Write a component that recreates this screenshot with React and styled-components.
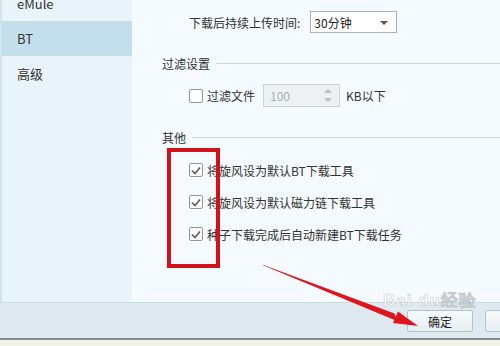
import styled, { createGlobalStyle } from "styled-components";

const GlobalStyle = createGlobalStyle`
  body {
    margin: 0;
    background: #f2f2ec;
    font-family: "Noto Sans CJK SC", "Liberation Sans", sans-serif;
    font-size: 12px;
    color: #333;
  }
`;

const Window = styled.div`
  position: relative;
  width: 500px;
  height: 340px;
  display: flex;
  flex-direction: column;
  overflow: hidden;
  border-bottom: 2px solid #858b8f;
  box-sizing: border-box;
`;

const Body = styled.div`
  display: flex;
  height: 304px;
`;

const Sidebar = styled.div`
  width: 130px;
  border-left: 2px solid #d2e3ec;
  background: #e9f4fa;
  display: flex;
  flex-direction: column;
  margin-top: -14px;
`;

const NavItem = styled.div`
  height: 35px;
  display: flex;
  align-items: center;
  padding-left: 15px;
  font-size: 13px;
  color: #333;
  background: ${({ $active }) => ($active ? "#c4dfec" : "transparent")};
`;

const Main = styled.div`
  flex: 1;
  background: #f4fafd;
  padding: 11px 0 0 30px;
  display: flex;
  flex-direction: column;
`;

const Row = styled.div`
  display: flex;
  align-items: center;
  height: ${({ $h }) => $h || 22}px;
  margin-left: ${({ $indent }) => ($indent ? 27 : 0)}px;
  margin-top: ${({ $mt }) => $mt || 0}px;
`;

const Label = styled.span`
  white-space: nowrap;
`;

const Select = styled.div`
  width: 87px;
  height: 22px;
  box-sizing: border-box;
  margin-left: 10px;
  border: 1px solid #a9b4ba;
  background: #fff;
  display: flex;
  align-items: center;
  justify-content: space-between;
  padding: 0 8px 0 3px;
  font-size: 12px;
  color: #222;
`;

const Caret = styled.span`
  width: 0;
  height: 0;
  border-left: 4px solid transparent;
  border-right: 4px solid transparent;
  border-top: 4px solid #555;
  margin-top: 2px;
`;

const SectionHead = styled.div`
  display: flex;
  align-items: center;
  height: 16px;
  margin-top: ${({ $mt }) => $mt}px;
  font-size: 12px;
  color: #333;

  &::after {
    content: "";
    flex: 1;
    height: 1px;
    margin-left: 6px;
    background: #ccd7dc;
  }
`;

const Box = styled.span`
  width: 14px;
  height: 14px;
  box-sizing: border-box;
  border: 1px solid #8e989d;
  border-radius: 2px;
  background: #fff;
  display: flex;
  align-items: center;
  justify-content: center;
  margin-right: 4px;
  flex-shrink: 0;
`;

const NumInput = styled.div`
  width: 77px;
  height: 23px;
  box-sizing: border-box;
  margin: 0 6px 0 8px;
  border: 1px solid #cbd2d6;
  background: #edf1f3;
  color: #a7afb4;
  display: flex;
  align-items: center;
  justify-content: space-between;
  padding: 0 7px 0 6px;
`;

const Spin = styled.span`
  display: flex;
  flex-direction: column;
  gap: 5px;

  &::before,
  &::after {
    content: "";
    width: 0;
    height: 0;
    border-left: 4px solid transparent;
    border-right: 4px solid transparent;
  }
  &::before {
    border-bottom: 4px solid #b9c1c6;
  }
  &::after {
    border-top: 4px solid #b9c1c6;
  }
`;

const Footer = styled.div`
  height: 34px;
  border-top: 1px solid #c9dae3;
  background: #dfeaf0;
  display: flex;
  align-items: center;
  justify-content: flex-end;
  gap: 12px;
  margin-right: -51px;
  padding-top: 1px;
`;

const Button = styled.div`
  width: 66px;
  height: 22px;
  box-sizing: border-box;
  border: 1px solid #b3c1c9;
  border-radius: 2px;
  background: linear-gradient(#f5f9fb, #e6eef2);
  display: flex;
  align-items: center;
  justify-content: center;
  font-size: 12px;
  color: #222;
`;

const Highlight = styled.div`
  position: absolute;
  left: 167px;
  top: 148px;
  width: 53px;
  height: 120px;
  box-sizing: border-box;
  border: 4px solid #d3111b;
  pointer-events: none;
`;

const Watermark = styled.div`
  position: absolute;
  left: 383px;
  top: 291px;
  font-family: "Liberation Sans", sans-serif;
  font-size: 17px;
  line-height: 20px;
  font-weight: bold;
  letter-spacing: 1px;
  color: rgba(255, 255, 255, 0.75);
  -webkit-text-stroke: 0.6px rgba(160, 170, 175, 0.6);
  pointer-events: none;
`;

const Overlay = styled.svg`
  position: absolute;
  left: 0;
  top: 0;
  pointer-events: none;
`;

const Check = () => (
  <svg width="10" height="9" viewBox="0 0 10 9">
    <path d="M1 4.5 L4 7.5 L9 1.5" fill="none" stroke="#5c5c5c" strokeWidth="1.7" />
  </svg>
);

const options = [
  "将旋风设为默认BT下载工具",
  "将旋风设为默认磁力链下载工具",
  "种子下载完成后自动新建BT下载任务",
];

export default function App() {
  return (
    <>
      <GlobalStyle />
      <Window>
        <Body>
          <Sidebar>
            <NavItem>eMule</NavItem>
            <NavItem $active>BT</NavItem>
            <NavItem>高级</NavItem>
          </Sidebar>
          <Main>
            <Row $indent>
              <Label>下载后持续上传时间:</Label>
              <Select>
                <span>30分钟</span>
                <Caret />
              </Select>
            </Row>
            <SectionHead $mt={22}>过滤设置</SectionHead>
            <Row $indent $h={23} $mt={13}>
              <Box />
              <Label>过滤文件</Label>
              <NumInput>
                <span>100</span>
                <Spin />
              </NumInput>
              <Label>KB以下</Label>
            </Row>
            <SectionHead $mt={22}>其他</SectionHead>
            {options.map((text, i) => (
              <Row key={text} $indent $h={20} $mt={i === 0 ? 15 : 12}>
                <Box>
                  <Check />
                </Box>
                <Label>{text}</Label>
              </Row>
            ))}
          </Main>
        </Body>
        <Footer>
          <Button>确定</Button>
          <Button>取消</Button>
        </Footer>
        <Watermark>Bai du经验</Watermark>
        <Highlight />
        <Overlay width="500" height="340">
          <polygon points="262,264.5 263.5,265.5 397,321 394.5,313.4" fill="#e0141c" />
          <polygon points="398,311.5 418,326 393,323" fill="#e0141c" />
        </Overlay>
      </Window>
    </>
  );
}
